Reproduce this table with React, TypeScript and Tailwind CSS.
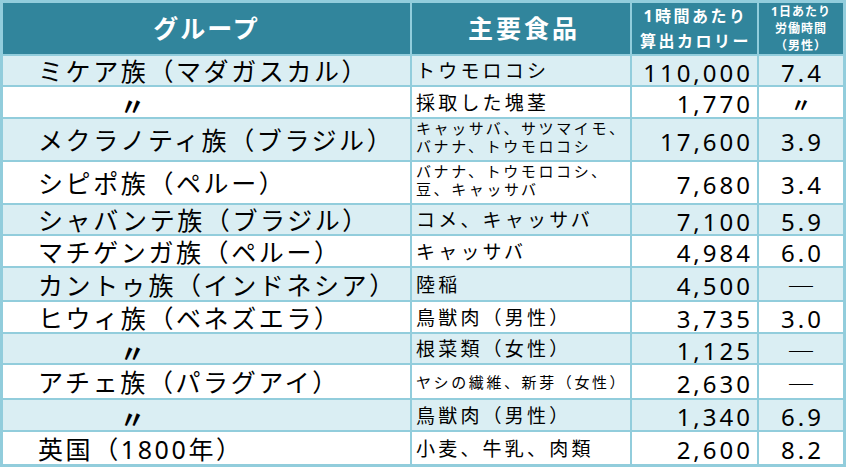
import React from "react";

type Row = {
  g: string;
  gDitto?: boolean;
  food: string[];
  small?: boolean;
  cal: string;
  hrs: string;
  light: boolean;
};

const rows: Row[] = [
  { g: "ミケア族（マダガスカル）", food: ["トウモロコシ"], cal: "110,000", hrs: "7.4", light: true },
  { g: "〃", gDitto: true, food: ["採取した塊茎"], cal: "1,770", hrs: "〃", light: false },
  { g: "メクラノティ族（ブラジル）", food: ["キャッサバ、サツマイモ、", "バナナ、トウモロコシ"], small: true, cal: "17,600", hrs: "3.9", light: true },
  { g: "シピポ族（ペルー）", food: ["バナナ、トウモロコシ、", "豆、キャッサバ"], small: true, cal: "7,680", hrs: "3.4", light: false },
  { g: "シャバンテ族（ブラジル）", food: ["コメ、キャッサバ"], cal: "7,100", hrs: "5.9", light: true },
  { g: "マチゲンガ族（ペルー）", food: ["キャッサバ"], cal: "4,984", hrs: "6.0", light: false },
  { g: "カントゥ族（インドネシア）", food: ["陸稲"], cal: "4,500", hrs: "―", light: true },
  { g: "ヒウィ族（ベネズエラ）", food: ["鳥獣肉（男性）"], cal: "3,735", hrs: "3.0", light: false },
  { g: "〃", gDitto: true, food: ["根菜類（女性）"], cal: "1,125", hrs: "―", light: true },
  { g: "アチェ族（パラグアイ）", food: ["ヤシの繊維、新芽（女性）"], small: true, cal: "2,630", hrs: "―", light: false },
  { g: "〃", gDitto: true, food: ["鳥獣肉（男性）"], cal: "1,340", hrs: "6.9", light: true },
  { g: "英国（1800年）", food: ["小麦、牛乳、肉類"], cal: "2,600", hrs: "8.2", light: false },
];

const jp = { fontFamily: '"Noto Sans", "Noto Sans CJK JP", sans-serif' };
const cjk = { fontFamily: '"Noto Sans CJK JP", sans-serif' };

export default function App() {
  return (
    <div className="w-[846px] h-[467px] bg-white">
      <div
        className="w-[846px] h-[467px] grid grid-cols-[407px_218px_125px_84px] grid-rows-[51px_29px_30px_41px_41px_29px_30px_32px_30px_29px_33px_30px_32px] gap-[2px] p-[3px] bg-[#92CDDC] text-black"
        style={jp}
      >
        {/* header */}
        <div className="bg-[#31859C] text-white font-bold text-[25px] tracking-[2px] flex items-center justify-center">
          グループ
        </div>
        <div className="bg-[#31859C] text-white font-bold text-[25px] tracking-[3px] flex items-center justify-center pl-[6px]">
          主要食品
        </div>
        <div className="bg-[#31859C] text-white font-bold text-[16px] tracking-[2.5px] leading-[25px] flex flex-col items-center justify-center pl-[2px]">
          <span>1時間あたり</span>
          <span>算出カロリー</span>
        </div>
        <div className="bg-[#31859C] text-white font-bold text-[12px] tracking-[1px] leading-[17px] flex flex-col items-center justify-center">
          <span>1日あたり</span>
          <span>労働時間</span>
          <span>（男性）</span>
        </div>

        {rows.map((r, i) => {
          const bg = r.light ? "bg-[#DAEEF3]" : "bg-white";
          return (
            <React.Fragment key={i}>
              <div className={`${bg} flex items-center whitespace-nowrap ${r.gDitto ? "pl-[117px] pt-[8px] font-bold text-[25px] leading-[18px]" : "pl-[35px] pt-[2px] text-[25px] tracking-[2.6px] leading-none"}`}>
                {r.g}
              </div>
              <div
                className={`${bg} flex flex-col justify-center pl-[4px] whitespace-nowrap ${
                  r.small ? "text-[15px] tracking-[2.6px] leading-[18px]" : "text-[19px] tracking-[3.2px] leading-none pt-[2px]"
                } ${r.food.length > 1 ? "pb-[6px]" : ""}`}
              >
                {r.food.map((f, j) => (
                  <span key={j}>{f}</span>
                ))}
              </div>
              <div className={`${bg} flex items-center justify-end pr-[4px] pt-[4px] text-[24px] tracking-[3px] leading-none`}>
                {r.cal}
              </div>
              {r.hrs === "―" ? (
                <div className={`${bg} flex items-center justify-center pt-[4px] text-[28px] leading-[20px] font-light`} style={cjk}>
                  {r.hrs}
                </div>
              ) : (
                <div
                  className={`${bg} flex items-center justify-center ${
                    r.hrs === "〃"
                      ? "text-[20px] font-bold pt-[8px] leading-[16px]"
                      : "text-[24px] tracking-[3px] pl-[3px] pt-[4px] leading-none"
                  }`}
                >
                  {r.hrs}
                </div>
              )}
            </React.Fragment>
          );
        })}
      </div>
    </div>
  );
}
